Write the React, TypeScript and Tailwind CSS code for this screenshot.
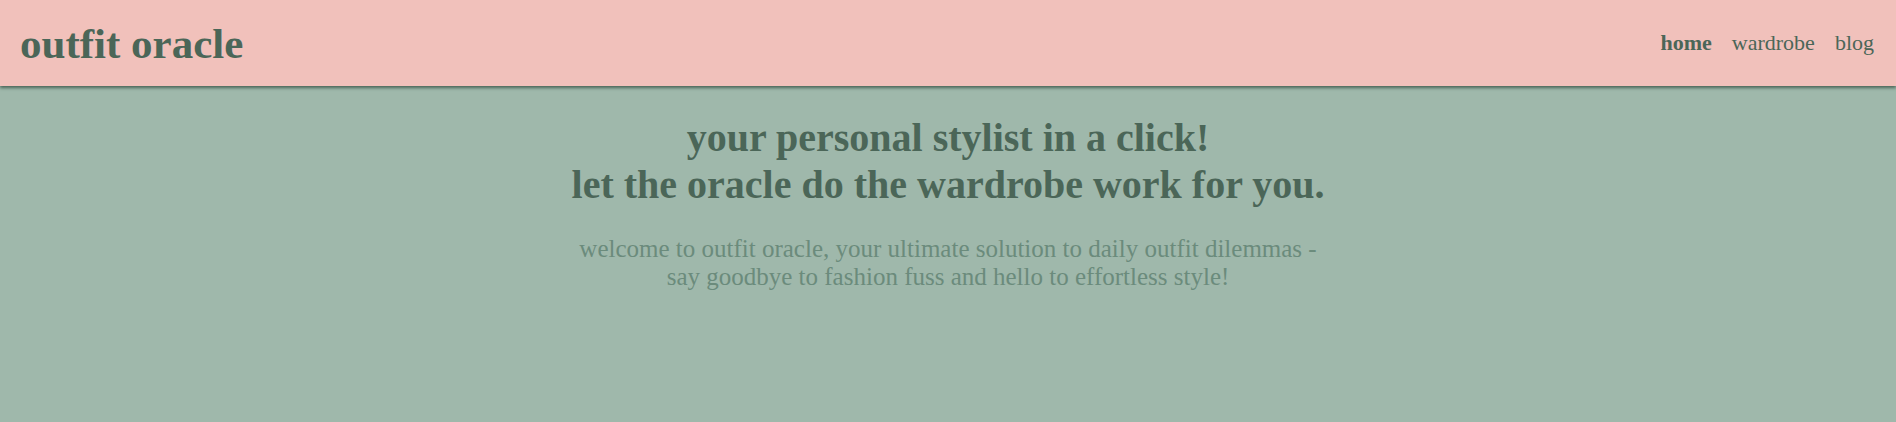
export default function App() {
  return (
    <div className="min-h-screen bg-[#9fb8ab] font-['Liberation_Serif','Times_New_Roman',serif] leading-[normal] text-[#4b6658]">
      <header className="relative z-10 flex h-[86px] items-center justify-between bg-[#f1c1bb] pl-5 pr-[22px] shadow-[0_2px_3px_#4b6658]">
        <h1 className="text-[43px] font-bold">outfit oracle</h1>
        <nav className="flex gap-5 text-[22px]">
          <a className="font-bold">home</a>
          <a>wardrobe</a>
          <a>blog</a>
        </nav>
      </header>

      <main className="flex flex-col items-center pt-[28px] text-center">
        <h2 className="text-[40px] font-bold">
          your personal stylist in a click!
          <br />
          let the oracle do the wardrobe work for you.
        </h2>
        <p className="mt-[27px] text-[25px] text-[#6b8b7c]">
          welcome to outfit oracle, your ultimate solution to daily outfit dilemmas -
          <br />
          say goodbye to fashion fuss and hello to effortless style!
        </p>
      </main>
    </div>
  );
}
